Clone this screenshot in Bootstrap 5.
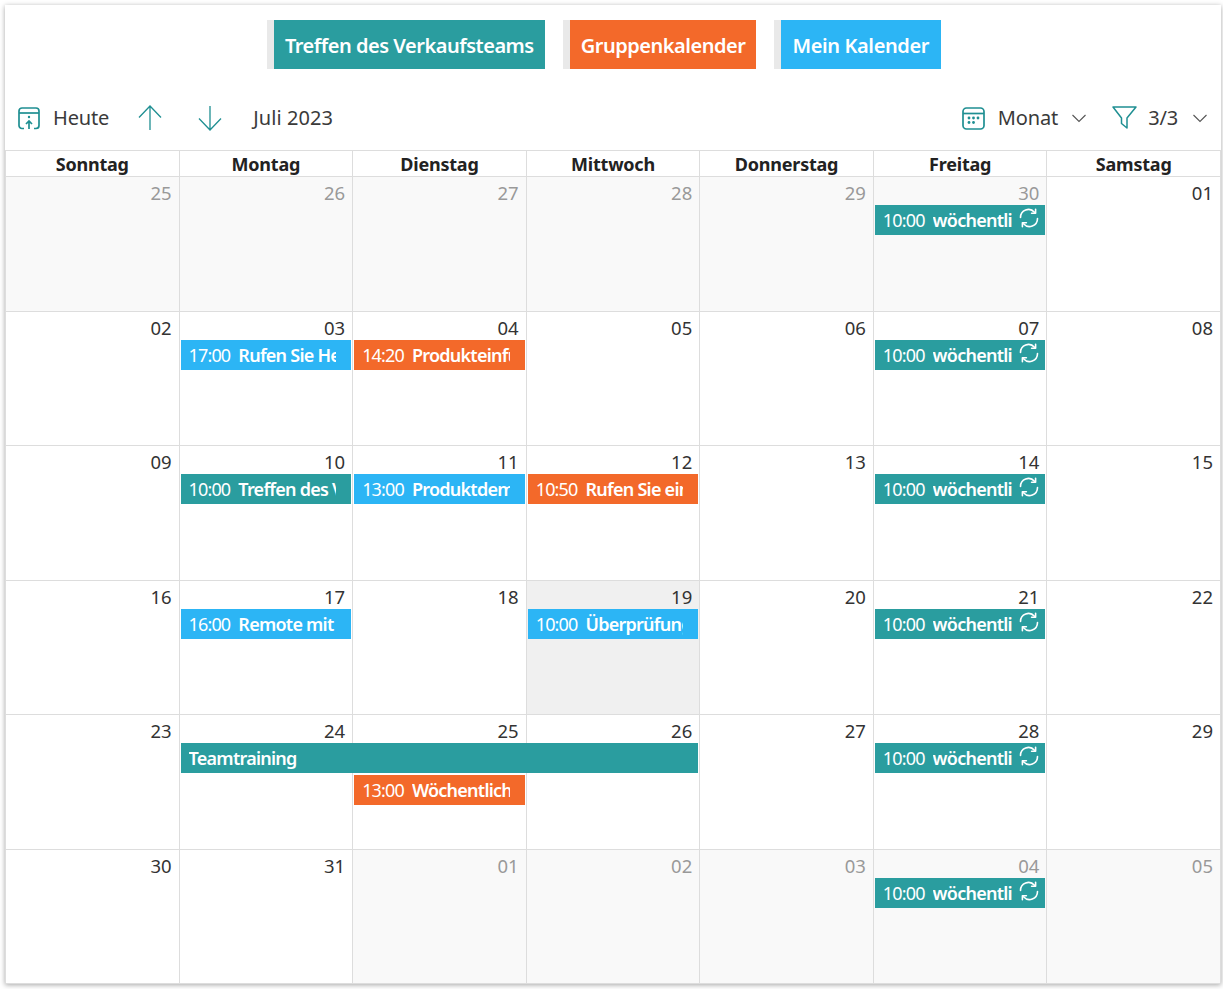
<!DOCTYPE html>
<html lang="de">
<head>
<meta charset="utf-8">
<title>Kalender</title>
<link rel="stylesheet" href="https://cdn.jsdelivr.net/npm/bootstrap@5.3.0/dist/css/bootstrap.min.css">
<style>
html,body{height:989px;overflow:hidden;background:#fff}
body{font-family:"Noto Sans","Open Sans","Liberation Sans",sans-serif;color:#333;padding:5px 2px 5px 5px}
.shell{height:979px;border:0;border-radius:0;box-shadow:0 1px 5px rgba(0,0,0,.35);display:flex;flex-direction:column;background:#fff}
.legend{padding-top:15px;height:76px}
.chip{height:49px;margin-right:18px;border-left:7px solid #e9e9e9;padding:3px 11px 0;font-size:20px;font-weight:600;color:#fff;display:flex;align-items:center;letter-spacing:-.48px}
.chip.b{padding-left:11px;padding-right:12px;letter-spacing:-.38px}
.t{background:#2a9d9f}.o{background:#f3692a}.b{background:#2cb5f5}
.tools{height:69px;font-size:20px;padding-top:5px;letter-spacing:-.15px;color:#3a3a3a}
.tools svg{display:block;flex:none}
.month-label{letter-spacing:.08px}
.cal{flex:1;min-height:0;border-left:1px solid #ddd;display:flex;flex-direction:column;border-bottom:1px solid #ddd}
.heads,.wk{display:grid;grid-template-columns:repeat(7,1fr)}
.heads{height:27px;border-top:1px solid #ddd;border-bottom:1px solid #ddd}
.heads>div{border-right:1px solid #ddd;text-align:center;font-weight:700;font-size:18px;line-height:27px;color:#222;letter-spacing:-.22px}
.wk{flex:1;min-height:0;grid-template-rows:28px 32px 32px 1fr;border-bottom:1px solid #ddd}
.wk:last-child{border-bottom:0}
.dy{grid-row:1/5;border-right:1px solid #ddd;text-align:right;padding:2px 7px 0 0;font-size:18.5px;line-height:28px;color:#333}
.dy.off{background:#f9f9f9;color:#999}
.dy.now{background:#f0f0f0}
.ev{height:30px;margin:0 2px 0 1px;color:#fff;display:flex;align-items:center;padding:1px 15px 0 8px;font-size:18px;white-space:nowrap;overflow:hidden;min-width:0}
.ev b{font-weight:600;overflow:hidden;flex:1;min-width:0;margin-left:8px;letter-spacing:-.75px}
.ev time{flex:none;letter-spacing:-.85px}
.ev.rep{padding-right:6px}
.ev svg{flex:none;margin-left:7px;margin-top:-5px}
.c1{grid-column:1}.c2{grid-column:2}.c3{grid-column:3}.c4{grid-column:4}.c5{grid-column:5}.c6{grid-column:6}.c7{grid-column:7}
.l2{grid-row:2}.l3{grid-row:3}
.sp3{grid-column:2/5}
</style>
</head>
<body>
<svg width="0" height="0" class="position-absolute"><defs>
<symbol id="rep" viewBox="0 0 20 20"><g fill="none" stroke="#fff" stroke-width="1.6" stroke-linecap="round" stroke-linejoin="round"><path d="M1.500 9.500A8 8 0 0 1 15.500 4.200"/><path d="M16.600 1.200v4h-4"/><path d="M18.500 10.500A8 8 0 0 1 4.500 15.800"/><path d="M3.400 18.800v-4h4"/></g></symbol>
</defs></svg>
<main class="card shell">
  <div class="legend d-flex justify-content-center align-items-start">
    <div class="chip t">Treffen des Verkaufsteams</div>
    <div class="chip o">Gruppenkalender</div>
    <div class="chip b">Mein Kalender</div>
  </div>
  <div class="tools d-flex align-items-center">
    <svg style="margin-left:13px" width="22" height="23" viewBox="0 0 22 23" fill="none" stroke="#1f8f92" stroke-width="1.7"><path d="M6 21.500H4a3 3 0 0 1-3-3V4a3 3 0 0 1 3-3h14a3 3 0 0 1 3 3v14.500a3 3 0 0 1-3 3h-2"/><path d="M1 6h20"/><path d="M11 22v-8M8 17l3-3 3 3"/><circle cx="11" cy="10" r="1.200" fill="#1f8f92" stroke="none"/></svg>
    <span style="margin-left:13px">Heute</span>
    <svg style="margin-left:29px" width="24" height="26" viewBox="0 0 24 26" fill="none" stroke="#1f8f92" stroke-width="1.3"><path d="M12 25V1M1 12.500 12 1l11 11.500"/></svg>
    <svg style="margin-left:36px" width="24" height="26" viewBox="0 0 24 26" fill="none" stroke="#1f8f92" stroke-width="1.3"><path d="M12 1v24M1 13.500 12 25l11-11.500"/></svg>
    <span class="month-label" style="margin-left:31px">Juli 2023</span>
    <svg class="ms-auto" width="23" height="23" viewBox="0 0 23 23" fill="none" stroke="#1f8f92" stroke-width="1.7"><rect x="1" y="1" width="21" height="21" rx="3.500"/><path d="M1 6.500h21"/><g fill="#1f8f92" stroke="none"><circle cx="7" cy="11" r="1.400"/><circle cx="11.500" cy="11" r="1.400"/><circle cx="16" cy="11" r="1.400"/><circle cx="7" cy="15.500" r="1.400"/><circle cx="11.500" cy="15.500" r="1.400"/></g></svg>
    <span style="margin-left:13px">Monat</span>
    <svg style="margin-left:14px" width="14" height="9" viewBox="0 0 14 9" fill="none" stroke="#555" stroke-width="1.1"><path d="M.5 1 7 7.500 13.500 1"/></svg>
    <svg style="margin-left:26px" width="25" height="24" viewBox="0 0 25 24" fill="none" stroke="#1f8f92" stroke-width="1.5" stroke-linejoin="round"><path d="M1 1h23l-9 11v10l-5.500-4.500V12z"/></svg>
    <span style="margin-left:11px">3/3</span>
    <svg style="margin-left:15px;margin-right:14px" width="14" height="9" viewBox="0 0 14 9" fill="none" stroke="#555" stroke-width="1.1"><path d="M.5 1 7 7.500 13.500 1"/></svg>
  </div>
  <div class="cal">
    <div class="heads"><div>Sonntag</div><div>Montag</div><div>Dienstag</div><div>Mittwoch</div><div>Donnerstag</div><div>Freitag</div><div>Samstag</div></div>

    <div class="wk">
      <div class="dy off c1">25</div><div class="dy off c2">26</div><div class="dy off c3">27</div><div class="dy off c4">28</div><div class="dy off c5">29</div><div class="dy off c6">30</div><div class="dy c7">01</div>
      <div class="ev rep t c6 l2"><time>10:00</time><b>wöchentlich</b><svg width="20" height="20"><use href="#rep"/></svg></div>
    </div>
    <div class="wk">
      <div class="dy c1">02</div><div class="dy c2">03</div><div class="dy c3">04</div><div class="dy c4">05</div><div class="dy c5">06</div><div class="dy c6">07</div><div class="dy c7">08</div>
      <div class="ev b c2 l2"><time>17:00</time><b>Rufen Sie Herrn an</b></div>
      <div class="ev o c3 l2"><time>14:20</time><b>Produkteinführung</b></div>
      <div class="ev rep t c6 l2"><time>10:00</time><b>wöchentlich</b><svg width="20" height="20"><use href="#rep"/></svg></div>
    </div>
    <div class="wk">
      <div class="dy c1">09</div><div class="dy c2">10</div><div class="dy c3">11</div><div class="dy c4">12</div><div class="dy c5">13</div><div class="dy c6">14</div><div class="dy c7">15</div>
      <div class="ev t c2 l2"><time>10:00</time><b>Treffen des Verkaufsteams</b></div>
      <div class="ev b c3 l2"><time>13:00</time><b>Produktdemo</b></div>
      <div class="ev o c4 l2"><time>10:50</time><b>Rufen Sie ein</b></div>
      <div class="ev rep t c6 l2"><time>10:00</time><b>wöchentlich</b><svg width="20" height="20"><use href="#rep"/></svg></div>
    </div>
    <div class="wk">
      <div class="dy c1">16</div><div class="dy c2">17</div><div class="dy c3">18</div><div class="dy now c4">19</div><div class="dy c5">20</div><div class="dy c6">21</div><div class="dy c7">22</div>
      <div class="ev b c2 l2"><time>16:00</time><b>Remote mit</b></div>
      <div class="ev b c4 l2"><time>10:00</time><b>Überprüfung</b></div>
      <div class="ev rep t c6 l2"><time>10:00</time><b>wöchentlich</b><svg width="20" height="20"><use href="#rep"/></svg></div>
    </div>
    <div class="wk">
      <div class="dy c1">23</div><div class="dy c2">24</div><div class="dy c3">25</div><div class="dy c4">26</div><div class="dy c5">27</div><div class="dy c6">28</div><div class="dy c7">29</div>
      <div class="ev t sp3 l2"><b class="ms-0">Teamtraining</b></div>
      <div class="ev o c3 l3"><time>13:00</time><b>Wöchentliche</b></div>
      <div class="ev rep t c6 l2"><time>10:00</time><b>wöchentlich</b><svg width="20" height="20"><use href="#rep"/></svg></div>
    </div>
    <div class="wk">
      <div class="dy c1">30</div><div class="dy c2">31</div><div class="dy off c3">01</div><div class="dy off c4">02</div><div class="dy off c5">03</div><div class="dy off c6">04</div><div class="dy off c7">05</div>
      <div class="ev rep t c6 l2"><time>10:00</time><b>wöchentlich</b><svg width="20" height="20"><use href="#rep"/></svg></div>
    </div>
  </div>
</main>
<script src="https://cdn.jsdelivr.net/npm/bootstrap@5.3.0/dist/js/bootstrap.bundle.min.js"></script>
</body>
</html>
